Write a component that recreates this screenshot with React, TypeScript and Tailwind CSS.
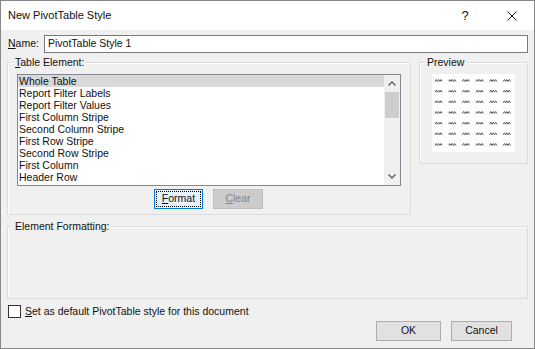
import React from "react";

const items = [
  "Whole Table",
  "Report Filter Labels",
  "Report Filter Values",
  "First Column Stripe",
  "Second Column Stripe",
  "First Row Stripe",
  "Second Row Stripe",
  "First Column",
  "Header Row",
];

function Group({
  label,
  className,
  children,
}: {
  label?: React.ReactNode;
  className: string;
  children?: React.ReactNode;
}) {
  return (
    <div
      className={`relative border border-[#dcdcdc] shadow-[inset_1px_1px_0_#ffffff] ${className}`}
    >
      <span className="absolute -top-[8px] left-[5px] bg-[#f0f0f0] px-[2px] leading-[14px]">
        {label}
      </span>
      {children}
    </div>
  );
}

// little zigzag marks of the preview grid
function PreviewGrid() {
  const cols = [3, 16.7, 30.3, 44, 57.7, 71.3];
  const rows = [5.5, 16.2, 26.8, 37.5, 48.2, 58.8, 69.5];
  return (
    <svg width="83" height="78" viewBox="0 0 83 78">
      {rows.map((y) =>
        cols.map((x) => (
          <polyline
            key={`${x}-${y}`}
            points={`${x},${y + 2} ${x + 1.2},${y} ${x + 2.4},${y + 2} ${x + 3.6},${y} ${x + 4.8},${y + 2} ${x + 6},${y} ${x + 7.2},${y + 2}`}
            fill="none"
            stroke="#595959"
            strokeWidth="1"
          />
        ))
      )}
    </svg>
  );
}

export default function App() {
  return (
    <div className="w-[535px] h-[349px] border border-[#888888] bg-[#f0f0f0] flex flex-col overflow-hidden text-[10.5px] text-[#111111] font-['Liberation_Sans',sans-serif] select-none">
      {/* title bar */}
      <div className="h-[29px] shrink-0 bg-white flex items-center pl-[7px]">
        <span className="flex-1 text-[11px]">New PivotTable Style</span>
        <span className="w-[12px] text-center text-[13px] mr-[36px]">?</span>
        <svg width="10" height="10" viewBox="0 0 10 10" className="mr-[17px]">
          <path d="M0.5 0.5 L9.5 9.5 M9.5 0.5 L0.5 9.5" stroke="#111" strokeWidth="1" />
        </svg>
      </div>

      <div className="flex flex-col px-[6px]">
        {/* name row */}
        <div className="flex items-center mt-[5px]">
          <span className="w-[37px] pl-[1px]">
            <u>N</u>ame:
          </span>
          <div className="flex-1 h-[18px] bg-white border border-[#7a7a7a] flex items-center pl-[3px]">
            PivotTable Style 1
          </div>
        </div>

        {/* table element + preview */}
        <div className="flex items-start gap-[8px] mt-[9px]">
          <Group
            label={
              <>
                <u>T</u>able Element:
              </>
            }
            className="w-[404px] h-[153px] pt-[11px] pl-[9px]"
          >
            <div className="w-[384px] h-[112px] bg-white border border-[#828790] flex">
              <div className="flex-1 flex flex-col">
                {items.map((it, i) => (
                  <div
                    key={it}
                    className={`h-[12px] leading-[12px] pl-[1px] ${i === 0 ? "bg-[#d9d9d9]" : ""}`}
                  >
                    {it}
                  </div>
                ))}
              </div>
              <div className="w-[16px] flex flex-col items-center bg-[#f0f0f0]">
                <div className="h-[17px] flex items-center justify-center">
                  <svg width="8" height="5" viewBox="0 0 8 5">
                    <path d="M0.5 4.5 L4 1 L7.5 4.5" fill="none" stroke="#606060" strokeWidth="1.4" />
                  </svg>
                </div>
                <div className="w-[14px] h-[26px] bg-[#cdcdcd]" />
                <div className="flex-1" />
                <div className="h-[17px] flex items-center justify-center">
                  <svg width="8" height="5" viewBox="0 0 8 5">
                    <path d="M0.5 0.5 L4 4 L7.5 0.5" fill="none" stroke="#606060" strokeWidth="1.4" />
                  </svg>
                </div>
              </div>
            </div>
            <div className="flex gap-[10px] mt-[3px] pl-[137px]">
              <button className="w-[49px] h-[20px] bg-[#e5f1fb] border border-[#0078d7] p-[1px]">
                <span className="w-full h-full flex items-center justify-center border border-dotted border-black">
                  <u>F</u>ormat
                </span>
              </button>
              <button className="w-[50px] h-[20px] bg-[#cccccc] border border-[#bfbfbf] text-[#838383] flex items-center justify-center">
                <u>C</u>lear
              </button>
            </div>
          </Group>

          <Group label="Preview" className="w-[109px] h-[102px] pt-[11px] pl-[12px]">
            <div className="w-[83px] h-[78px] bg-white">
              <PreviewGrid />
            </div>
          </Group>
        </div>

        {/* element formatting */}
        <Group label="Element Formatting:" className="h-[73px] mt-[11px]" />

        {/* checkbox */}
        <div className="flex items-center mt-[5px] pl-[1px]">
          <div className="w-[13px] h-[13px] bg-white border border-[#333333]" />
          <span className="ml-[4px]">
            <u>S</u>et as default PivotTable style for this document
          </span>
        </div>

        {/* ok / cancel */}
        <div className="flex justify-end gap-[10px] mt-[1px] pr-[16px]">
          <button className="w-[65px] h-[20px] bg-[#e1e1e1] border border-[#adadad]">OK</button>
          <button className="w-[61px] h-[20px] bg-[#e1e1e1] border border-[#adadad]">Cancel</button>
        </div>
      </div>
    </div>
  );
}
